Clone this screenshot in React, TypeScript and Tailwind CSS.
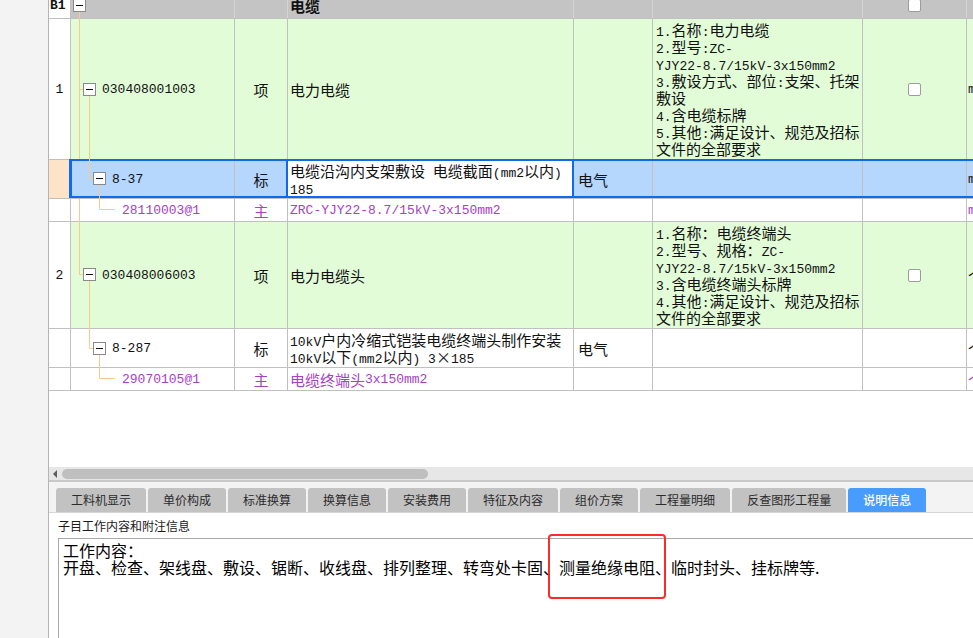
import React from "react";

const COL = {
  no: "w-[22px]",
  code: "w-[164px]",
  kind: "w-[53px]",
  name: "w-[286px]",
  spec: "w-[79px]",
  feat: "w-[210px]",
  check: "w-[104px]",
  unit: "w-[80px]",
};

const GREEN = "bg-[#e2fcd8]";
const SEL = "bg-[#b5d6fd]";
const PURPLE = "text-[#a641c4]";

// latin runs get a narrow mono face, like the half-width glyphs of 宋体
function Txt({ t, bold = false }: { t: string; bold?: boolean }) {
  return (
    <>
      {t.split(/([\x20-\x7e]+)/).map((p, i) =>
        /^[\x20-\x7e]+$/.test(p) ? (
          <span key={i} className={`font-['Liberation_Mono',monospace] text-[13px] leading-none ${bold ? "font-bold" : ""}`}>
            {p}
          </span>
        ) : (
          <span key={i} className={`leading-none ${bold ? "font-bold" : ""}`}>{p}</span>
        )
      )}
    </>
  );
}

function Cell({
  w,
  className = "",
  children,
}: {
  w: string;
  className?: string;
  children?: React.ReactNode;
}) {
  return (
    <div className={`flex h-full shrink-0 items-center overflow-hidden border-r border-[#c0c0c0] ${w} ${className}`}>
      {children}
    </div>
  );
}

function Lines({ lines }: { lines: string[] }) {
  return (
    <div className="flex flex-col">
      {lines.map((l, i) => (
        <div key={i} className="flex h-[17px] items-center whitespace-pre">
          <div>
            <Txt t={l} />
          </div>
        </div>
      ))}
    </div>
  );
}

function Checkbox() {
  return <div className="h-[13px] w-[13px] rounded-[2px] border border-[#9c9c9c] bg-white" />;
}

function TreeLines() {
  const line = "#fbc98c";
  const box = (x: number, y: number) => (
    <g>
      <rect x={x + 0.5} y={y + 0.5} width="12" height="12" fill="#fff" stroke="#8a8a8a" />
      <path d={`M${x + 3} ${y + 6.5}H${x + 10}`} stroke="#111" />
    </g>
  );
  return (
    <svg className="pointer-events-none absolute left-0 top-0" width="80" height="400">
      <g transform="translate(-49 0)" fill="none">
        <path
          d="M79.5 12V159M79.5 199V274.5M79 89.5H83M79 274.5H83M89.5 96V178.5H93M99.5 185V209.5H115M89.5 281V348.5H93M99.5 355V378.5H115"
          stroke={line}
        />
        {box(73, -1)}
        {box(83, 83)}
        {box(93, 172)}
        {box(83, 268)}
        {box(93, 342)}
      </g>
    </svg>
  );
}

const TABS = ["工料机显示", "单价构成", "标准换算", "换算信息", "安装费用", "特征及内容", "组价方案", "工程量明细", "反查图形工程量", "说明信息"];

export default function App() {
  return (
    <div className="relative flex h-[638px] w-[973px] overflow-hidden bg-white font-['Noto_Sans_CJK_SC','Noto_Sans',sans-serif] text-[#111]">
      <div className="w-[49px] shrink-0 border-r border-[#b4b4b4] bg-[#f3f3f3]" />

      <div className="flex min-w-0 flex-1 flex-col">
        {/* grid */}
        <div className="relative h-[467px] shrink-0 overflow-hidden bg-white text-[15px] leading-[17px]">
          <div className="-mt-[7px]">
            {/* header */}
            <div className="flex h-[26px] border-b border-[#c0c0c0]">
              <Cell w={COL.no} className="border-[#c0c0c0] bg-white pl-[1px]">
                <Txt t="B1" bold />
              </Cell>
              <Cell w={COL.code} className="border-[#d4d4d4] bg-[#c4c4c4]" />
              <Cell w={COL.kind} className="border-[#d4d4d4] bg-[#c4c4c4]" />
              <Cell w={COL.name} className="border-[#d4d4d4] bg-[#c4c4c4] pl-[2px]">
                <Txt t="电缆" bold />
              </Cell>
              <Cell w={COL.spec} className="border-[#d4d4d4] bg-[#c4c4c4]" />
              <Cell w={COL.feat} className="border-[#d4d4d4] bg-[#c4c4c4]" />
              <Cell w={COL.check} className="justify-center border-[#d4d4d4] bg-[#c4c4c4]">
                <Checkbox />
              </Cell>
              <Cell w={COL.unit} className="bg-[#c4c4c4]" />
            </div>

            {/* row 1 */}
            <div className="flex h-[141px] border-b border-[#c0c0c0]">
              <Cell w={COL.no} className="justify-center bg-white">
                <Txt t="1" />
              </Cell>
              <Cell w={COL.code} className={`${GREEN} pl-[31px]`}>
                <Txt t="030408001003" />
              </Cell>
              <Cell w={COL.kind} className={`${GREEN} justify-center`}>项</Cell>
              <Cell w={COL.name} className={`${GREEN} pl-[2px]`}>电力电缆</Cell>
              <Cell w={COL.spec} className={GREEN} />
              <Cell w={COL.feat} className={`${GREEN} pl-[3px]`}>
                <Lines
                  lines={[
                    "1.名称:电力电缆",
                    "2.型号:ZC-",
                    "YJY22-8.7/15kV-3x150mm2",
                    "3.敷设方式、部位:支架、托架",
                    "敷设",
                    "4.含电缆标牌",
                    "5.其他:满足设计、规范及招标",
                    "文件的全部要求",
                  ]}
                />
              </Cell>
              <Cell w={COL.check} className={`${GREEN} justify-center`}>
                <Checkbox />
              </Cell>
              <Cell w={COL.unit} className={`${GREEN} border-r-0 pl-[1px]`}>
                <Txt t="m" />
              </Cell>
            </div>

            {/* 8-37, selected */}
            <div className="relative flex h-[39px] border-b border-[#c0c0c0]">
              <Cell w={COL.no} className="bg-[#fde4c6]" />
              <Cell w={COL.code} className={`${SEL} pl-[41px]`}>
                <Txt t="8-37" />
              </Cell>
              <Cell w={COL.kind} className={`${SEL} justify-center`}>标</Cell>
              <Cell w={COL.name} className="bg-white pl-[2px]">
                <Lines lines={["电缆沿沟内支架敷设 电缆截面(mm2以内)", "185"]} />
              </Cell>
              <Cell w={COL.spec} className={`${SEL} pl-[4px]`}>电气</Cell>
              <Cell w={COL.feat} className={SEL} />
              <Cell w={COL.check} className={SEL} />
              <Cell w={COL.unit} className={`${SEL} border-r-0 pl-[1px]`}>
                <Txt t="m" />
              </Cell>
              <div className="absolute -top-px bottom-0 left-[20px] right-0 border-y-2 border-l-[3px] border-[#1169f2]" />
              <div className="absolute -top-px bottom-0 left-[237px] w-[288px] border-2 border-[#1169f2]" />
            </div>

            {/* 28110003@1 */}
            <div className={`flex h-[23px] border-b border-[#c0c0c0] ${PURPLE}`}>
              <Cell w={COL.no} className="bg-white" />
              <Cell w={COL.code} className="bg-white pl-[51px]">
                <Txt t="28110003@1" />
              </Cell>
              <Cell w={COL.kind} className="justify-center bg-white">主</Cell>
              <Cell w={COL.name} className="bg-white pl-[2px]">
                <Txt t="ZRC-YJY22-8.7/15kV-3x150mm2" />
              </Cell>
              <Cell w={COL.spec} className="bg-white" />
              <Cell w={COL.feat} className="bg-white" />
              <Cell w={COL.check} className="bg-white" />
              <Cell w={COL.unit} className="border-r-0 bg-white pl-[1px]">
                <Txt t="m" />
              </Cell>
            </div>

            {/* row 2 */}
            <div className="flex h-[107px] border-b border-[#c0c0c0]">
              <Cell w={COL.no} className="justify-center bg-white">
                <Txt t="2" />
              </Cell>
              <Cell w={COL.code} className={`${GREEN} pl-[31px]`}>
                <Txt t="030408006003" />
              </Cell>
              <Cell w={COL.kind} className={`${GREEN} justify-center`}>项</Cell>
              <Cell w={COL.name} className={`${GREEN} pl-[2px]`}>电力电缆头</Cell>
              <Cell w={COL.spec} className={GREEN} />
              <Cell w={COL.feat} className={`${GREEN} pl-[3px]`}>
                <Lines
                  lines={[
                    "1.名称：电缆终端头",
                    "2.型号、规格：ZC-",
                    "YJY22-8.7/15kV-3x150mm2",
                    "3.含电缆终端头标牌",
                    "4.其他:满足设计、规范及招标",
                    "文件的全部要求",
                  ]}
                />
              </Cell>
              <Cell w={COL.check} className={`${GREEN} justify-center`}>
                <Checkbox />
              </Cell>
              <Cell w={COL.unit} className={`${GREEN} border-r-0 pl-[1px]`}>个</Cell>
            </div>

            {/* 8-287 */}
            <div className="flex h-[39px] border-b border-[#c0c0c0]">
              <Cell w={COL.no} className="bg-white" />
              <Cell w={COL.code} className="bg-white pl-[41px]">
                <Txt t="8-287" />
              </Cell>
              <Cell w={COL.kind} className="justify-center bg-white">标</Cell>
              <Cell w={COL.name} className="bg-white pl-[2px]">
                <Lines lines={["10kV户内冷缩式铠装电缆终端头制作安装", "10kV以下(mm2以内) 3×185"]} />
              </Cell>
              <Cell w={COL.spec} className="bg-white pl-[4px]">电气</Cell>
              <Cell w={COL.feat} className="bg-white" />
              <Cell w={COL.check} className="bg-white" />
              <Cell w={COL.unit} className="border-r-0 bg-white pl-[1px]">个</Cell>
            </div>

            {/* 29070105@1 */}
            <div className={`flex h-[23px] border-b border-[#c0c0c0] ${PURPLE}`}>
              <Cell w={COL.no} className="bg-white" />
              <Cell w={COL.code} className="bg-white pl-[51px]">
                <Txt t="29070105@1" />
              </Cell>
              <Cell w={COL.kind} className="justify-center bg-white">主</Cell>
              <Cell w={COL.name} className="bg-white pl-[2px]">
                <Txt t="电缆终端头3x150mm2" />
              </Cell>
              <Cell w={COL.spec} className="bg-white" />
              <Cell w={COL.feat} className="bg-white" />
              <Cell w={COL.check} className="bg-white" />
              <Cell w={COL.unit} className="border-r-0 bg-white pl-[1px]">个</Cell>
            </div>
          </div>

          <TreeLines />
        </div>

        {/* horizontal scrollbar */}
        <div className="flex h-[15px] shrink-0 items-center border-b-2 border-[#c9c9c9] bg-[#e7e7e7]">
          <svg className="ml-[4px]" width="5" height="8" viewBox="0 0 5 8">
            <path d="M4 0V8L0 4Z" fill="#5e5e5e" />
          </svg>
          <div className="ml-[4px] h-[10px] w-[366px] rounded-full bg-[#bfbfbf]" />
        </div>

        {/* tabs */}
        <div className="flex h-[30px] shrink-0 items-end gap-[2px] bg-[#f3f3f3] pl-[7px]">
          {TABS.map((t) => (
            <div
              key={t}
              className={`flex h-[24px] items-center rounded-t-[3px] px-[15px] text-[12px] ${
                t === "说明信息" ? "bg-[#479cfd] font-medium text-white" : "bg-[#c2c2c2] text-[#2b2b2b]"
              }`}
            >
              {t}
            </div>
          ))}
        </div>

        {/* 说明信息 */}
        <div className="flex flex-1 flex-col border-t border-[#d6d6d6] bg-white">
          <div className="flex h-[25px] shrink-0 items-center pl-[9px] text-[12px] text-[#1a1a1a]">子目工作内容和附注信息</div>
          <div className="ml-[9px] flex-1 border-l border-t border-[#a9a9a9] pl-[4px] pt-[3px] text-[16px] leading-[17px] text-black">
            <div className="h-[17px]">工作内容：</div>
            <div className="h-[17px] whitespace-nowrap">开盘、检查、架线盘、敷设、锯断、收线盘、排列整理、转弯处卡固、测量绝缘电阻、临时封头、挂标牌等.</div>
          </div>
        </div>
      </div>

      {/* annotation */}
      <div className="absolute left-[548px] top-[534px] h-[65px] w-[118px] rounded-[4px] border-2 border-[#ff2b2b]" />
    </div>
  );
}
